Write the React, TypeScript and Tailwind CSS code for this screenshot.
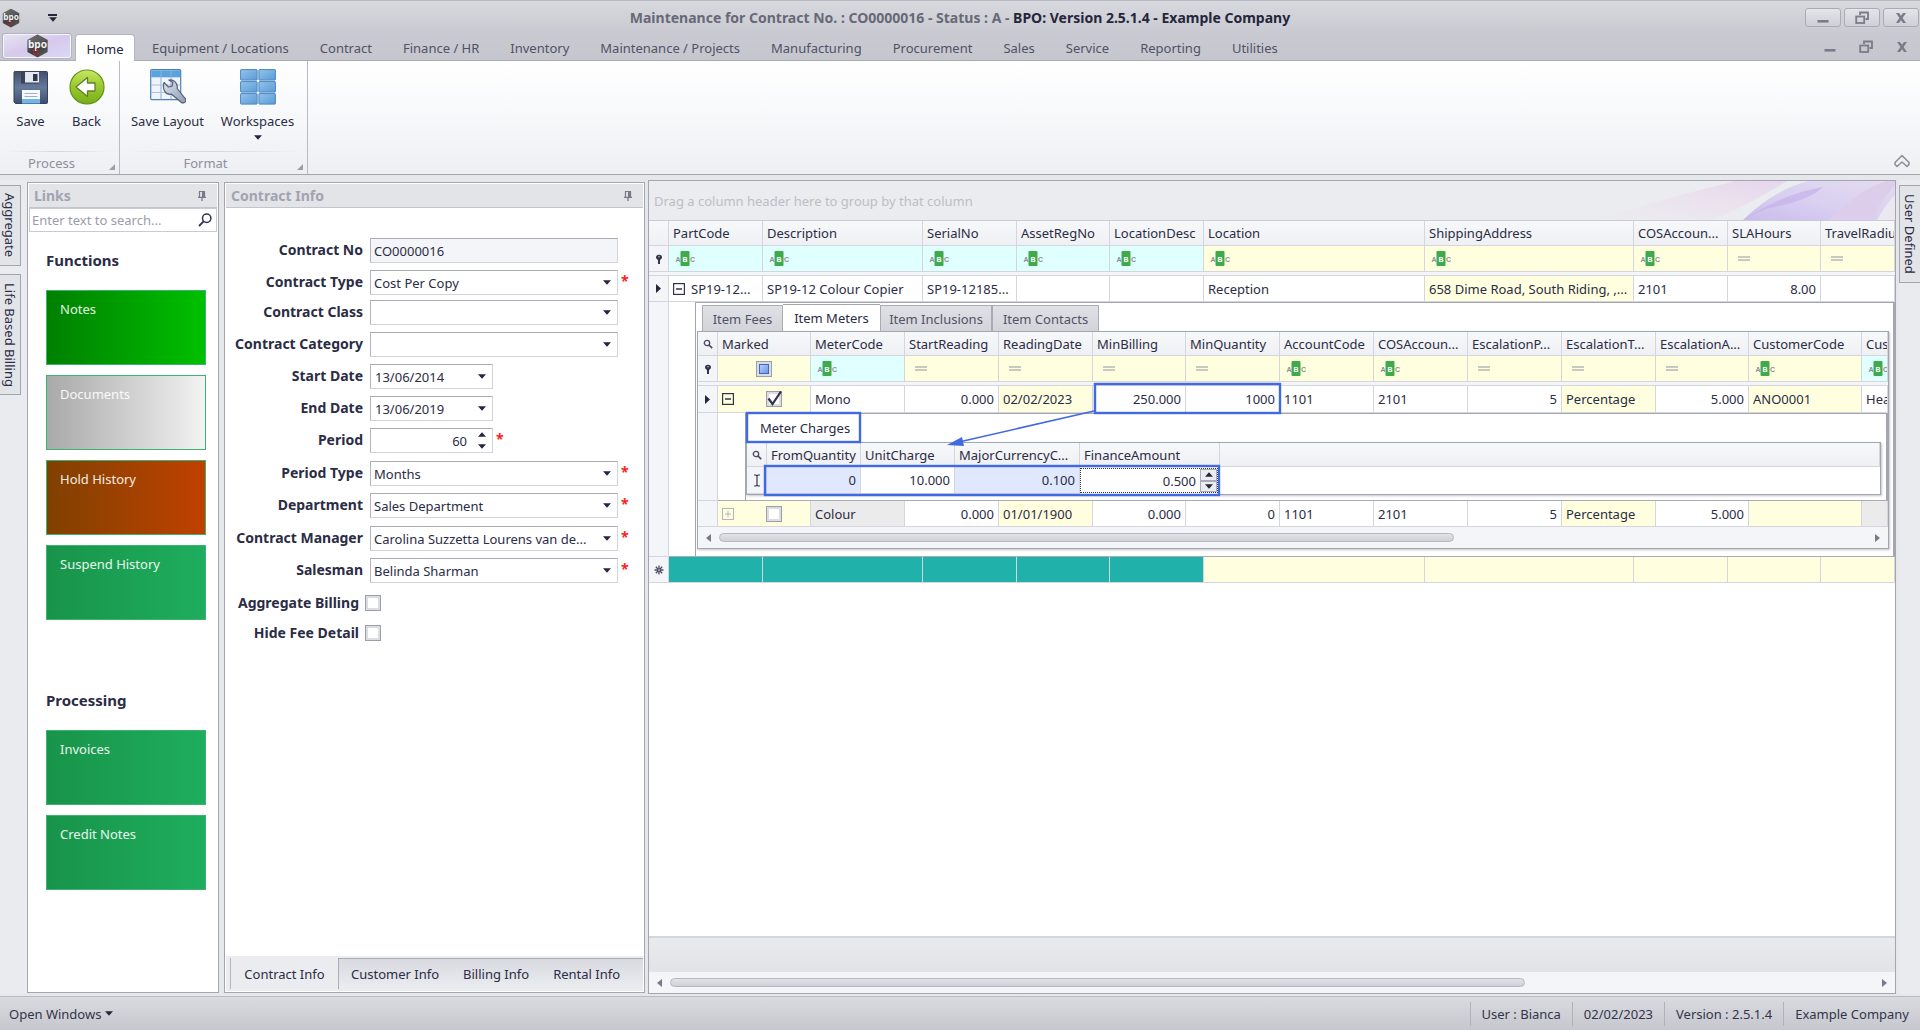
import type { ReactNode } from "react";

type Tone = "white" | "cyan" | "yellow" | "grey" | "teal" | "lavender";

const tones: Record<Tone, string> = {
  white: "bg-white",
  cyan: "bg-[#e0ffff]",
  yellow: "bg-[#ffffe0]",
  grey: "bg-[#ebebeb]",
  teal: "bg-[#20b2aa]",
  lavender: "bg-[#e0e8fd]",
};

/* ---------- icons ---------- */

function Logo({ className }: { className: string }) {
  return (
    <svg viewBox="0 0 24 26" className={className} aria-hidden="true">
      <defs>
        <linearGradient id="hex" x1="0" y1="0" x2="1" y2="1">
          <stop offset="0" stopColor="#7b7b7d" />
          <stop offset="0.5" stopColor="#3c3c3e" />
          <stop offset="1" stopColor="#5d5d60" />
        </linearGradient>
      </defs>
      <path d="M12 0.5 23 6.5V19.5L12 25.5 1 19.5V6.5Z" fill="url(#hex)" />
      <path d="M12 0.5 23 6.5 12 11 1 6.5Z" fill="#6a6a6c" opacity="0.6" />
      <text x="12" y="15.500" textAnchor="middle" fontSize="11" fontWeight="700" fill="#f2f2f2">bpo</text>
      <circle cx="10" cy="19.5" r="2.8" fill="none" stroke="#d0202c" strokeWidth="1.3" strokeDasharray="3 1.4" />
    </svg>
  );
}

function Down({ className = "" }: { className?: string }) {
  return (
    <svg viewBox="0 0 8 5" className={`h-[5px] w-2 ${className}`} aria-hidden="true">
      <path d="M0 0.3h8L4 4.8z" fill="#25263c" />
    </svg>
  );
}

function Up() {
  return (
    <svg viewBox="0 0 8 5" className="h-[5px] w-2" aria-hidden="true">
      <path d="M0 4.7h8L4 0.2z" fill="#25263c" />
    </svg>
  );
}

function SaveIcon() {
  return (
    <svg viewBox="0 0 36 36" className="size-9" aria-hidden="true">
      <defs>
        <linearGradient id="disk" x1="0" y1="0" x2="0" y2="1">
          <stop offset="0" stopColor="#44506a" />
          <stop offset="0.5" stopColor="#65799b" />
          <stop offset="1" stopColor="#3f4d70" />
        </linearGradient>
      </defs>
      <path d="M1.500 2.500h32a1 1 0 0 1 1 1v30a1 1 0 0 1-1 1h-31l-1.500-1.500v-29.500a1 1 0 0 1 .5-1z" fill="url(#disk)" stroke="#36415c" />
      <rect x="8" y="2.500" width="18" height="12" fill="#3a4257" />
      <rect x="12" y="3" width="14" height="10.500" fill="#e3e8f1" />
      <rect x="20" y="5" width="4.500" height="7" fill="#2f3648" />
      <rect x="9" y="21" width="18" height="13" fill="#f7f9fc" />
      <path d="M11.500 24.500h13M11.500 27.500h13" stroke="#9bb0cf" />
      <rect x="9" y="30" width="18" height="4.500" fill="#72b6e6" />
    </svg>
  );
}

function BackIcon() {
  return (
    <svg viewBox="0 0 36 36" className="size-9" aria-hidden="true">
      <defs>
        <linearGradient id="ball" x1="0" y1="0" x2="0" y2="1">
          <stop offset="0" stopColor="#c9e765" />
          <stop offset="0.45" stopColor="#9ccb30" />
          <stop offset="1" stopColor="#78ad18" />
        </linearGradient>
      </defs>
      <circle cx="18" cy="18" r="17" fill="url(#ball)" stroke="#639319" strokeWidth="1.200" />
      <path d="M7 18 18.500 8.500V14H26v8h-7.500v5.500z" fill="#fff" stroke="#5f7f2c" strokeWidth="1.300" strokeLinejoin="round" />
    </svg>
  );
}

function LayoutIcon() {
  return (
    <svg viewBox="0 0 36 36" className="size-9" aria-hidden="true">
      <defs>
        <linearGradient id="steel" x1="0" y1="0" x2="1" y2="1">
          <stop offset="0" stopColor="#dfe5ef" />
          <stop offset="1" stopColor="#8e9bb2" />
        </linearGradient>
      </defs>
      <rect x="0.700" y="0.700" width="30" height="30" rx="1" fill="#f1f4fb" stroke="#4d7fb8" strokeWidth="1.200" />
      <rect x="1.300" y="1.300" width="28.800" height="7" fill="#5aa3dc" />
      <path d="M11 1v29.500M21 1v29.500" stroke="#8fb0d8" />
      <path d="M1 16h29.500M1 23.500h29.500" stroke="#a9bfdf" />
      <path d="M14 13.500l4.500 4.500 3.500-.8.800-3.700-4-2.500c5-.8 9.200 3 8.400 8.500l7.800 9.800a2.700 2.700 0 0 1-3.800 3.900l-9.600-8c-6 1.200-9.600-4.700-7.600-11.700z" fill="url(#steel)" stroke="#55617a" strokeWidth="1.200" strokeLinejoin="round" />
    </svg>
  );
}

function WorkspacesIcon() {
  return (
    <svg viewBox="0 0 36 36" className="size-9" aria-hidden="true">
      <defs>
        <linearGradient id="tile" x1="0" y1="0" x2="1" y2="1">
          <stop offset="0" stopColor="#92c4ea" />
          <stop offset="1" stopColor="#5c9ad6" />
        </linearGradient>
      </defs>
      {[0.6, 12.6, 24.6].map((y) =>
        [0.6, 18.9].map((x) => (
          <rect key={`${x}-${y}`} x={x} y={y} width="16.500" height="10.500" rx="0.500" fill="url(#tile)" stroke="#4a86c4" />
        )),
      )}
    </svg>
  );
}

function Pin() {
  return (
    <svg viewBox="0 0 10 12" className="h-3 w-2.5" aria-hidden="true">
      <path d="M2.500 7V1.500h5V7" stroke="#77798c" fill="none" strokeWidth="1.200" />
      <rect x="5" y="1.500" width="3" height="5.500" fill="#77798c" />
      <path d="M1 7.300h8M5 7.500V11" stroke="#77798c" strokeWidth="1.300" />
    </svg>
  );
}

function Lens({ className }: { className: string }) {
  return (
    <svg viewBox="0 0 14 14" className={className} aria-hidden="true">
      <circle cx="8.700" cy="5.200" r="4.200" fill="none" stroke="#33344a" strokeWidth="1.500" />
      <path d="M5.600 8.400 1 13" stroke="#33344a" strokeWidth="1.800" />
    </svg>
  );
}

function GridLens() {
  return (
    <svg viewBox="0 0 10 10" className="mx-auto size-2.5" aria-hidden="true">
      <circle cx="4" cy="4" r="2.700" fill="none" stroke="#4a4b5e" strokeWidth="1.300" />
      <path d="M6 6 9.200 9.200" stroke="#4a4b5e" strokeWidth="1.700" />
    </svg>
  );
}

function FilterMark() {
  return (
    <svg viewBox="0 0 8 10" className="mx-auto h-2.5 w-2" aria-hidden="true">
      <path d="M4 0.700a3 2.600 0 0 1 3 2.600c0 1.500-1.300 2-2 3V10H3V6.300c-.700-1-2-1.500-2-3A3 2.600 0 0 1 4 .700z" fill="#33344a" />
      <circle cx="4" cy="2.800" r="0.800" fill="#b8b9c4" />
    </svg>
  );
}

function RowArrow() {
  return (
    <svg viewBox="0 0 5 9" className="mx-auto h-[9px] w-[5px]" aria-hidden="true">
      <path d="M0 0l5 4.500L0 9z" fill="#25263c" />
    </svg>
  );
}

function EditMark() {
  return (
    <svg viewBox="0 0 8 13" className="mx-auto h-[13px] w-2" aria-hidden="true">
      <path d="M1 1h2l1 1 1-1h2M1 12h2l1-1 1 1h2M4 2v9" stroke="#3a3b50" fill="none" strokeWidth="1.200" />
    </svg>
  );
}

function NewMark() {
  return (
    <svg viewBox="0 0 10 10" className="mx-auto size-2.5" aria-hidden="true">
      <path d="M5 0.500v9M0.500 5h9M1.800 1.800l6.400 6.400M8.200 1.800 1.800 8.200" stroke="#4a4b5e" strokeWidth="1.300" />
      <circle cx="5" cy="5" r="0.800" fill="#fff" />
    </svg>
  );
}

function AbcFilter() {
  return (
    <button type="button" aria-label="Contains filter" className="ml-0.5 block">
      <svg viewBox="0 0 20 15" className="h-[15px] w-5" fontFamily="Liberation Sans" fontWeight="700" aria-hidden="true">
        <text x="0.500" y="10.500" fontSize="7" fill="#8b8c94">A</text>
        <rect x="5.500" y="0" width="9" height="15" rx="1" fill="#3fa94c" />
        <text x="7.500" y="10.500" fontSize="7" fill="#fff">B</text>
        <text x="15" y="10.500" fontSize="7" fill="#8b8c94">C</text>
      </svg>
    </button>
  );
}

function EqualsFilter() {
  return (
    <button type="button" aria-label="Equals filter" className="ml-1.5 block">
      <svg viewBox="0 0 12 5" className="h-[5px] w-3" aria-hidden="true">
        <path d="M0 1h12M0 4h12" stroke="#92939d" strokeWidth="1.200" />
      </svg>
    </button>
  );
}

function Expander({ open, faint }: { open: boolean; faint?: boolean }) {
  return (
    <button type="button" aria-label={open ? "Collapse row" : "Expand row"} className="block">
      <svg viewBox="0 0 12 12" className="size-3" stroke={faint ? "#b4b5bf" : "#33344a"} fill="none" aria-hidden="true">
        <rect x="0.500" y="0.500" width="11" height="11" strokeWidth={faint ? 1 : 1.4} />
        <path d={open ? "M3 6h6" : "M3 6h6M6 3v6"} strokeWidth={faint ? 1 : 1.5} />
      </svg>
    </button>
  );
}

function MinimizeGlyph() {
  return (
    <svg viewBox="0 0 14 14" className="size-3.5" aria-hidden="true">
      <rect x="1.500" y="9" width="11" height="2.600" fill="#7b7c8a" />
    </svg>
  );
}

function RestoreGlyph() {
  return (
    <svg viewBox="0 0 14 14" className="size-3.5" fill="none" stroke="#7b7c8a" strokeWidth="1.800" aria-hidden="true">
      <path d="M5 4V1.500h8V8h-2.500" />
      <rect x="1.200" y="5.500" width="8" height="6.500" />
    </svg>
  );
}

function CloseGlyph() {
  return (
    <svg viewBox="0 0 14 14" className="size-3.5" aria-hidden="true">
      <path d="M2 2h3l2 2.700L9 2h3L8.600 7l3.400 5H9L7 9.200 5 12H2l3.400-5z" fill="#7b7c8a" />
    </svg>
  );
}

function ScrollArrow({ left }: { left?: boolean }) {
  return (
    <svg viewBox="0 0 5 8" className="h-2 w-[5px] shrink-0" aria-hidden="true">
      <path d={left ? "M5 0v8L0 4z" : "M0 0v8l5-4z"} fill="#77798c" />
    </svg>
  );
}

/* ---------- ribbon ---------- */

const ribbonTabs = [
  "Equipment / Locations",
  "Contract",
  "Finance / HR",
  "Inventory",
  "Maintenance / Projects",
  "Manufacturing",
  "Procurement",
  "Sales",
  "Service",
  "Reporting",
  "Utilities",
];

function TitleBar() {
  const box =
    "flex h-[19px] w-9 items-center justify-center rounded-[3px] border border-[#a9abb6] bg-linear-to-b from-[#e4e5e9] to-[#cfd0d7]";
  return (
    <header className="grid h-[34px] grid-cols-[1fr_auto_1fr] items-center border-t border-[#b9bac2] bg-linear-to-b from-[#d8d9de] to-[#c9cad1]">
      <div className="flex items-center pl-0.5">
        <Logo className="h-5 w-[18px]" />
        <button type="button" aria-label="Customize quick access toolbar" className="ml-7 flex flex-col items-center gap-px">
          <span className="h-0.5 w-[9px] bg-[#25263c]" />
          <Down />
        </button>
      </div>
      <h1 className="text-sm leading-5 font-bold whitespace-nowrap text-[#25263c]">
        <span className="text-[#676878]">Maintenance for Contract No. : CO0000016 - Status : A -</span> BPO: Version
        2.5.1.4 - Example Company
      </h1>
      <div className="flex justify-end gap-[3px] pr-px">
        <button type="button" aria-label="Minimize" className={box}><MinimizeGlyph /></button>
        <button type="button" aria-label="Restore" className={box}><RestoreGlyph /></button>
        <button type="button" aria-label="Close" className={box}><CloseGlyph /></button>
      </div>
    </header>
  );
}

function RibbonTabs() {
  return (
    <nav className="flex h-[27px] items-stretch border-b border-[#a9abb6] bg-linear-to-b from-[#c9cad1] to-[#c6c7ce] text-[#515266]">
      <button
        type="button"
        aria-label="Application menu"
        className="ml-[3px] flex h-6 w-[68px] items-center justify-center rounded-xs border border-white/80 bg-linear-to-br from-[#e6e2f3] via-[#d6c9ec] to-[#d9d8f6] outline outline-[#b3b4c0]"
      >
        <Logo className="h-6 w-[23px]" />
      </button>
      <button type="button" className="mr-px -mb-px ml-1 w-[60px] rounded-t-sm border border-b-0 border-[#b3b4be] bg-white pt-0.5 text-[#25263c]">
        Home
      </button>
      {ribbonTabs.map((t) => (
        <button key={t} type="button" className="pt-0.5 pr-[15px] pl-4">
          {t}
        </button>
      ))}
      <div className="ml-auto flex items-center gap-[22px] pr-[11px]">
        <button type="button" aria-label="Minimize document"><MinimizeGlyph /></button>
        <button type="button" aria-label="Restore document"><RestoreGlyph /></button>
        <button type="button" aria-label="Close document"><CloseGlyph /></button>
      </div>
    </nav>
  );
}

function RibbonGroup({ title, width, children }: { title: string; width: string; children: ReactNode }) {
  return (
    <section className={`flex flex-col border-r border-[#b9bac4] ${width}`}>
      <div className="flex flex-1 justify-center pt-2 pr-0.5">{children}</div>
      <div className="mx-2 h-px bg-linear-to-r from-transparent via-[#d5d6dd] to-transparent" />
      <div className="flex h-[22px] items-center">
        <h2 className="flex-1 pr-1.5 text-center text-[#8e8f9d]">{title}</h2>
        <svg viewBox="0 0 6 6" className="mt-2 mr-1 size-1.5" aria-hidden="true">
          <path d="M6 0v6H0z" fill="#9d9eaa" />
        </svg>
      </div>
    </section>
  );
}

function RibbonButton({ label, width, icon, menu }: { label: string; width: string; icon: ReactNode; menu?: boolean }) {
  return (
    <button type="button" className={`flex flex-col items-center whitespace-nowrap ${width}`}>
      {icon}
      <span className="mt-2">{label}</span>
      {menu && <Down className="mt-1.5" />}
    </button>
  );
}

function Ribbon() {
  return (
    <div className="flex h-[114px] border-b border-[#a3a5b0] bg-linear-to-b from-white via-[#f7f8fa] to-[#eeeff3]">
      <RibbonGroup title="Process" width="w-[120px]">
        <RibbonButton label="Save" width="w-14" icon={<SaveIcon />} />
        <RibbonButton label="Back" width="w-14" icon={<BackIcon />} />
      </RibbonGroup>
      <RibbonGroup title="Format" width="w-[188px]">
        <RibbonButton label="Save Layout" width="w-[90px]" icon={<LayoutIcon />} />
        <RibbonButton label="Workspaces" width="w-[90px]" icon={<WorkspacesIcon />} menu />
      </RibbonGroup>
      <button type="button" aria-label="Collapse ribbon" className="mt-auto mr-2.5 mb-1.5 ml-auto">
        <svg viewBox="0 0 16 14" className="h-3.5 w-4" fill="none" stroke="#8b8c9a" strokeWidth="1.500" aria-hidden="true">
          <path d="M1 8.500 8 1.500l7 7v2l-2 2L8 8l-5 4.500-2-2z" strokeLinejoin="round" />
        </svg>
      </button>
    </div>
  );
}

/* ---------- docked panels ---------- */

function SideTab({ label, className }: { label: string; className: string }) {
  return (
    <button
      type="button"
      className={`w-[21px] border border-[#a3a5b0] bg-[#e3e4e8] whitespace-nowrap [writing-mode:vertical-rl] ${className}`}
    >
      {label}
    </button>
  );
}

function PanelHeader({ title }: { title: string }) {
  return (
    <div className="flex h-6 items-center justify-between border-b border-[#c3c4cc] bg-[#e3e4e8] pr-2.5 pl-[5px]">
      <h2 className="text-sm font-bold text-[#a2a3b1]">{title}</h2>
      <button type="button" aria-label={`Pin ${title}`}><Pin /></button>
    </div>
  );
}

function Tile({ label, tone }: { label: string; tone: string }) {
  return (
    <button
      type="button"
      className={`h-[75px] w-40 border border-[#3cb371] bg-linear-to-r px-[13px] pt-2.5 pb-12 text-left text-white/90 ${tone}`}
    >
      {label}
    </button>
  );
}

const green = "from-[#18944a] to-[#1eae5d]";

function LinksPanel() {
  return (
    <aside className="flex w-[192px] flex-col border border-[#a3a5b0] bg-white p-px">
      <PanelHeader title="Links" />
      <div className="flex h-6 items-center border border-[#c9cad2] pr-1 pl-0.5">
        <input
          type="search"
          aria-label="Search links"
          placeholder="Enter text to search..."
          className="min-w-0 flex-1 outline-none placeholder:text-[#9b9cab]"
        />
        <Lens className="size-3.5" />
      </div>
      <div className="flex flex-col gap-2.5 pt-4 pl-[17px]">
        <h3 className="mb-2 h-6 text-[15px] leading-6 font-bold">Functions</h3>
        <Tile label="Notes" tone="from-[#008000] to-[#00c000]" />
        <Tile label="Documents" tone="from-[#a9a9a9] to-[#f3f3f3]" />
        <Tile label="Hold History" tone="from-[#804000] to-[#c04000]" />
        <Tile label="Suspend History" tone={green} />
        <h3 className="mt-[58px] mb-2 h-6 text-[15px] leading-6 font-bold">Processing</h3>
        <Tile label="Invoices" tone={green} />
        <Tile label="Credit Notes" tone={green} />
      </div>
    </aside>
  );
}

type Field = {
  id: string;
  label: string;
  kind: "readonly" | "select" | "date" | "spin";
  value: string;
  required?: boolean;
  height: string;
};

const fields: Field[] = [
  { id: "no", label: "Contract No", kind: "readonly", value: "CO0000016", height: "h-8" },
  { id: "type", label: "Contract Type", kind: "select", value: "Cost Per Copy", required: true, height: "h-[30px]" },
  { id: "class", label: "Contract Class", kind: "select", value: "", height: "h-8" },
  { id: "category", label: "Contract Category", kind: "select", value: "", height: "h-8" },
  { id: "start", label: "Start Date", kind: "date", value: "13/06/2014", height: "h-8" },
  { id: "end", label: "End Date", kind: "date", value: "13/06/2019", height: "h-8" },
  { id: "period", label: "Period", kind: "spin", value: "60", required: true, height: "h-[33px]" },
  { id: "periodType", label: "Period Type", kind: "select", value: "Months", required: true, height: "h-8" },
  { id: "department", label: "Department", kind: "select", value: "Sales Department", required: true, height: "h-[33px]" },
  { id: "manager", label: "Contract Manager", kind: "select", value: "Carolina Suzzetta Lourens van de...", required: true, height: "h-8" },
  { id: "salesman", label: "Salesman", kind: "select", value: "Belinda Sharman", required: true, height: "h-[30px]" },
];

function FieldControl({ field }: { field: Field }) {
  const frame = "h-[25px] border border-[#d3d4db] border-t-[#a9abb6] border-l-[#b3b5bf]";
  if (field.kind === "readonly")
    return <input id={field.id} readOnly defaultValue={field.value} className={`w-[248px] bg-[#f4f5f8] px-[3px] ${frame}`} />;
  if (field.kind === "select")
    return (
      <div className="relative">
        <select id={field.id} className={`block w-[248px] appearance-none bg-white pr-6 pl-[3px] ${frame}`}>
          <option>{field.value}</option>
        </select>
        <Down className="pointer-events-none absolute top-2.5 right-[7px]" />
      </div>
    );
  if (field.kind === "date")
    return (
      <div className={`flex w-[123px] items-center bg-white pr-1.5 ${frame}`}>
        <input id={field.id} defaultValue={field.value} className="min-w-0 flex-1 pl-1" />
        <button type="button" aria-label={`Choose ${field.label}`}><Down /></button>
      </div>
    );
  return (
    <div className={`flex w-[123px] items-center gap-[11px] bg-white pr-1.5 ${frame}`}>
      <input id={field.id} defaultValue={field.value} className="min-w-0 flex-1 text-right" />
      <div className="flex flex-col gap-[7px]">
        <button type="button" aria-label="Increase period"><Up /></button>
        <button type="button" aria-label="Decrease period"><Down /></button>
      </div>
    </div>
  );
}

function ContractPanel() {
  return (
    <section className="flex w-[421px] flex-col border border-[#a3a5b0] bg-white p-px">
      <PanelHeader title="Contract Info" />
      <form className="flex-1 pt-[30px]">
        {fields.map((f) => (
          <div key={f.id} className={`flex items-start ${f.height}`}>
            <label htmlFor={f.id} className="mr-[7px] w-[137px] text-right text-sm leading-[23px] font-bold whitespace-nowrap">
              {f.label}
            </label>
            <FieldControl field={f} />
            {f.required && <span className="ml-[3px] text-sm leading-[22px] font-bold text-[#ff2020]">*</span>}
          </div>
        ))}
        {["Aggregate Billing", "Hide Fee Detail"].map((t) => (
          <label key={t} className="flex h-[30px] items-center text-sm font-bold">
            <span className="mr-1.5 w-[133px] text-right whitespace-nowrap">{t}</span>
            <input type="checkbox" className="size-4 appearance-none border border-[#9c9eab] bg-white shadow-[inset_0_0_0_2px_#dcdde3]" />
          </label>
        ))}
      </form>
      <div className="flex h-[35px] items-stretch bg-[#ebecf0] pl-1">
        <button type="button" className="my-0.5 w-[108px] border-l border-[#b3b5bf]">Contract Info</button>
        <div className="my-0.5 flex flex-1 border-t border-l border-[#a9abb6] bg-linear-to-b from-[#d9dae0] to-[#ebecf0]">
          {["Customer Info", "Billing Info", "Rental Info"].map((t) => (
            <button key={t} type="button" className="px-3">{t}</button>
          ))}
        </div>
      </div>
    </section>
  );
}

/* ---------- grids ---------- */

const line = "border-r border-b border-[#d4d5dd]";

function HeadCell({ children }: { children?: ReactNode }) {
  return (
    <th scope="col" className={`overflow-hidden bg-linear-to-b from-[#f7f8fa] to-[#eff0f3] px-1 text-left font-normal whitespace-nowrap ${line}`}>
      {children}
    </th>
  );
}

function Cell({ tone = "white", right, children }: { tone?: Tone; right?: boolean; children?: ReactNode }) {
  return (
    <td className={`overflow-hidden px-1 whitespace-nowrap ${line} ${tones[tone]} ${right ? "text-right" : ""}`}>
      {children}
    </td>
  );
}

function Indicator({ children }: { children?: ReactNode }) {
  return <td className={`bg-[#f4f5f8] p-0 ${line}`}>{children}</td>;
}

function GapRow({ span }: { span: number }) {
  return (
    <tr className="h-1">
      <td colSpan={span} className="h-1 border-b border-[#d4d5dd] bg-[#f4f5f8] p-0" />
    </tr>
  );
}

function ScrollBar({ thumb, label }: { thumb: string; label: string }) {
  return (
    <div role="scrollbar" aria-label={label} aria-orientation="horizontal" aria-controls="grid" aria-valuenow={0} className="flex h-[21px] items-center bg-[#f4f5f8] px-2">
      <ScrollArrow left />
      <div className="mx-2 flex-1">
        <div className={`h-[9px] rounded-full border border-[#b6b7c1] bg-linear-to-b from-[#e2e3e7] to-[#cfd0d7] ${thumb}`} />
      </div>
      <ScrollArrow />
    </div>
  );
}

function MeterCharges() {
  return (
    <div className="h-[87px] border-t border-r-2 border-l border-[#a3a5b0] bg-white">
      <div className="h-7">
        <button type="button" className="h-7 w-[116px] pl-0.5">Meter Charges</button>
      </div>
      <div className="mr-[5px] border border-[#a3a5b0] shadow-[1px_1px_2px_#c3c4cc]">
        <table className="w-full table-fixed border-separate border-spacing-0">
          <colgroup>
            <col className="w-5" />
            <col className="w-[94px]" />
            <col className="w-[94px]" />
            <col className="w-[125px]" />
            <col className="w-[140px]" />
            <col />
          </colgroup>
          <thead>
            <tr className="h-6">
              <HeadCell><GridLens /></HeadCell>
              <HeadCell>FromQuantity</HeadCell>
              <HeadCell>UnitCharge</HeadCell>
              <HeadCell>MajorCurrencyC...</HeadCell>
              <HeadCell>FinanceAmount</HeadCell>
              <HeadCell />
            </tr>
          </thead>
          <tbody>
            <tr className="h-[27px]">
              <Indicator><EditMark /></Indicator>
              <Cell tone="lavender" right>0</Cell>
              <Cell right>10.000</Cell>
              <Cell tone="lavender" right>0.100</Cell>
              <td className="bg-white py-0 pr-0.5 pl-0">
                <div className="flex h-[25px] items-center border border-dotted border-[#33344a]">
                  <input aria-label="FinanceAmount" defaultValue="0.500" className="min-w-0 flex-1 pr-1 text-right" />
                  <div className="flex h-full w-[17px] flex-col">
                    <button type="button" aria-label="Increase amount" className="flex flex-1 items-center justify-center border border-[#a9abb6] bg-[#ebecef]"><Up /></button>
                    <button type="button" aria-label="Decrease amount" className="flex flex-1 items-center justify-center border border-[#a9abb6] bg-[#ebecef]"><Down /></button>
                  </div>
                </div>
              </td>
              <td className="bg-white" />
            </tr>
          </tbody>
        </table>
      </div>
    </div>
  );
}

const meterColumns: { name: string; width: string; tone: Tone; abc?: boolean }[] = [
  { name: "MeterCode", width: "w-[94px]", tone: "cyan", abc: true },
  { name: "StartReading", width: "w-[94px]", tone: "yellow" },
  { name: "ReadingDate", width: "w-[94px]", tone: "yellow" },
  { name: "MinBilling", width: "w-[93px]", tone: "yellow" },
  { name: "MinQuantity", width: "w-[94px]", tone: "yellow" },
  { name: "AccountCode", width: "w-[94px]", tone: "yellow", abc: true },
  { name: "COSAccoun...", width: "w-[94px]", tone: "yellow", abc: true },
  { name: "EscalationP...", width: "w-[94px]", tone: "yellow" },
  { name: "EscalationT...", width: "w-[94px]", tone: "yellow" },
  { name: "EscalationA...", width: "w-[93px]", tone: "yellow" },
  { name: "CustomerCode", width: "w-[113px]", tone: "yellow", abc: true },
  { name: "Cus", width: "", tone: "cyan", abc: true },
];

function ItemMeters() {
  return (
    <div className="relative mr-1 ml-px border border-[#a3a5b0] shadow-[1px_1px_2px_#c3c4cc]">
      <table className="w-full table-fixed border-separate border-spacing-0">
        <colgroup>
          <col className="w-5" />
          <col className="w-[93px]" />
          {meterColumns.map((c) => <col key={c.name} className={c.width} />)}
        </colgroup>
        <thead>
          <tr className="h-6">
            <HeadCell><GridLens /></HeadCell>
            <HeadCell>Marked</HeadCell>
            {meterColumns.map((c) => <HeadCell key={c.name}>{c.name}</HeadCell>)}
          </tr>
        </thead>
        <tbody>
          <tr className="h-[26px]">
            <Indicator><FilterMark /></Indicator>
            <Cell tone="yellow">
              <button type="button" aria-label="Filter marked" className="mx-auto block size-4 border border-[#9c9eab] bg-[#dcdde3] p-0.5">
                <span className="block size-full border border-[#3e68c0] bg-linear-to-br from-[#b7cdf6] to-[#6f97e4]" />
              </button>
            </Cell>
            {meterColumns.map((c) => (
              <Cell key={c.name} tone={c.tone}>{c.abc ? <AbcFilter /> : <EqualsFilter />}</Cell>
            ))}
          </tr>
          <GapRow span={14} />
          <tr className="h-[27px]">
            <Indicator><RowArrow /></Indicator>
            <Cell tone="yellow">
              <div className="flex items-center gap-8">
                <Expander open />
                <label className="relative size-4">
                  <input type="checkbox" aria-label="Mono marked" defaultChecked className="block size-4 appearance-none border border-[#9c9eab] bg-white shadow-[inset_0_0_0_2px_#dcdde3]" />
                  <svg viewBox="0 0 16 16" className="pointer-events-none absolute inset-0 size-4" aria-hidden="true">
                    <path d="M2.500 7.500 6.500 13 15 0.500" fill="none" stroke="#33344a" strokeWidth="2.200" />
                  </svg>
                </label>
              </div>
            </Cell>
            <Cell>Mono</Cell>
            <Cell right>0.000</Cell>
            <Cell tone="yellow">02/02/2023</Cell>
            <Cell right>250.000</Cell>
            <Cell right>1000</Cell>
            <Cell>1101</Cell>
            <Cell>2101</Cell>
            <Cell right>5</Cell>
            <Cell tone="yellow">Percentage</Cell>
            <Cell right>5.000</Cell>
            <Cell tone="yellow">ANO0001</Cell>
            <Cell>Hea</Cell>
          </tr>
          <tr>
            <Indicator />
            <td colSpan={13} className="border-b border-[#a9abb6] bg-white p-0 pl-[27px]"><MeterCharges /></td>
          </tr>
          <tr className="h-[26px]">
            <Indicator />
            <Cell tone="yellow">
              <div className="flex items-center gap-8">
                <Expander open={false} faint />
                <input type="checkbox" aria-label="Colour marked" className="size-4 appearance-none border border-[#9c9eab] bg-white shadow-[inset_0_0_0_2px_#dcdde3]" />
              </div>
            </Cell>
            <Cell tone="grey">Colour</Cell>
            <Cell right>0.000</Cell>
            <Cell tone="yellow">01/01/1900</Cell>
            <Cell right>0.000</Cell>
            <Cell right>0</Cell>
            <Cell>1101</Cell>
            <Cell>2101</Cell>
            <Cell right>5</Cell>
            <Cell tone="yellow">Percentage</Cell>
            <Cell right>5.000</Cell>
            <Cell tone="yellow" />
            <Cell tone="grey" />
          </tr>
        </tbody>
      </table>
      <ScrollBar thumb="w-[64%]" label="Scroll item meters" />
      <svg viewBox="0 0 600 170" className="pointer-events-none absolute -top-px -left-px h-[170px] w-[600px]" aria-hidden="true">
        <g fill="none" stroke="#4169e1" strokeWidth="2.400">
          <rect x="398" y="53" width="185" height="29" />
          <rect x="50" y="82" width="113" height="29" />
          <rect x="68" y="135" width="454" height="29" />
        </g>
        <path d="M397 80 262 111" stroke="#4169e1" strokeWidth="1.600" />
        <path d="M250 114 265 106 267 115z" fill="#4169e1" />
      </svg>
    </div>
  );
}

function ItemTabs() {
  const idle = "h-[26px] border border-b-0 border-[#a9abb6] bg-linear-to-b from-[#e0e1e6] to-[#d3d4da] text-[#515266]";
  return (
    <div className="flex h-7 items-end pl-1.5">
      <button type="button" className={`w-[81px] ${idle}`}>Item Fees</button>
      <button type="button" className="-mb-px h-7 w-[97px] border-t border-[#a3a5b0] bg-white pb-0.5">Item Meters</button>
      <button type="button" className={`w-[112px] ${idle}`}>Item Inclusions</button>
      <button type="button" className={`w-[107px] ${idle}`}>Item Contacts</button>
    </div>
  );
}

const itemColumns: { name: string; width: string; tone: Tone; abc?: boolean; fresh: Tone }[] = [
  { name: "PartCode", width: "w-[94px]", tone: "cyan", abc: true, fresh: "teal" },
  { name: "Description", width: "w-[160px]", tone: "cyan", abc: true, fresh: "teal" },
  { name: "SerialNo", width: "w-[94px]", tone: "cyan", abc: true, fresh: "teal" },
  { name: "AssetRegNo", width: "w-[93px]", tone: "cyan", abc: true, fresh: "teal" },
  { name: "LocationDesc", width: "w-[94px]", tone: "cyan", abc: true, fresh: "teal" },
  { name: "Location", width: "w-[221px]", tone: "yellow", abc: true, fresh: "yellow" },
  { name: "ShippingAddress", width: "w-[209px]", tone: "yellow", abc: true, fresh: "yellow" },
  { name: "COSAccoun...", width: "w-[94px]", tone: "yellow", abc: true, fresh: "yellow" },
  { name: "SLAHours", width: "w-[93px]", tone: "yellow", fresh: "yellow" },
  { name: "TravelRadiu", width: "", tone: "yellow", fresh: "yellow" },
];

function GroupBar() {
  return (
    <div className="relative flex h-10 items-center overflow-hidden border-b border-[#c9cad2] bg-[#ebecef] px-[5px] text-[#bcbdc7]">
      Drag a column header here to group by that column
      <svg viewBox="0 0 300 39" className="absolute top-0 right-0 h-[39px] w-[300px]" aria-hidden="true">
        <defs>
          <linearGradient id="pink" x1="0" y1="1" x2="1" y2="0">
            <stop offset="0" stopColor="#ecdff0" stopOpacity="0" />
            <stop offset="0.600" stopColor="#ead9ec" />
            <stop offset="1" stopColor="#e3c8ec" />
          </linearGradient>
          <linearGradient id="violet" x1="0" y1="1" x2="1" y2="0">
            <stop offset="0" stopColor="#c9bcec" />
            <stop offset="0.450" stopColor="#d9cff1" />
            <stop offset="1" stopColor="#e4dcee" />
          </linearGradient>
        </defs>
        <path d="M0 39C60 20 110 8 140 0h52Q150 26 118 39z" fill="url(#pink)" opacity="0.600" />
        <path d="M148 39Q180 8 214 0h86v39z" fill="url(#violet)" />
        <path d="M150 38Q190 12 228 6 214 20 170 28z" fill="#c2aeea" opacity="0.600" />
        <path d="M234 39Q264 8 292 0h8v4Q282 24 278 39z" fill="#dccdea" />
        <path d="M282 39Q290 24 300 14v25z" fill="#ebe8f0" />
      </svg>
    </div>
  );
}

function ItemsPanel() {
  return (
    <main className="flex min-w-0 flex-1 flex-col overflow-hidden border border-[#a3a5b0] bg-white">
      <GroupBar />
      <table id="grid" className="w-full table-fixed border-separate border-spacing-0">
        <colgroup>
          <col className="w-5" />
          {itemColumns.map((c) => <col key={c.name} className={c.width} />)}
        </colgroup>
        <thead>
          <tr className="h-[25px]">
            <HeadCell />
            {itemColumns.map((c) => <HeadCell key={c.name}>{c.name}</HeadCell>)}
          </tr>
        </thead>
        <tbody>
          <tr className="h-[26px]">
            <Indicator><FilterMark /></Indicator>
            {itemColumns.map((c) => (
              <Cell key={c.name} tone={c.tone}>{c.abc ? <AbcFilter /> : <EqualsFilter />}</Cell>
            ))}
          </tr>
          <GapRow span={11} />
          <tr className="h-[26px]">
            <Indicator><RowArrow /></Indicator>
            <Cell>
              <div className="flex items-center gap-1.5">
                <Expander open />
                SP19-12...
              </div>
            </Cell>
            <Cell>SP19-12 Colour Copier</Cell>
            <Cell>SP19-12185...</Cell>
            <Cell />
            <Cell />
            <Cell>Reception</Cell>
            <Cell tone="yellow">658 Dime Road, South Riding, ,...</Cell>
            <Cell>2101</Cell>
            <Cell right>8.00</Cell>
            <Cell />
          </tr>
          <tr>
            <Indicator />
            <td colSpan={10} className="border-b border-[#a9abb6] p-0 pl-[26px]">
              <div className="border-t border-r-2 border-l border-[#a3a5b0] pb-[7px]">
                <ItemTabs />
                <ItemMeters />
              </div>
            </td>
          </tr>
          <tr className="h-[26px]">
            <Indicator><NewMark /></Indicator>
            {itemColumns.map((c) => <Cell key={c.name} tone={c.fresh} />)}
          </tr>
        </tbody>
      </table>
      <div className="mt-auto h-9 border-t-2 border-[#d4d5dd] bg-linear-to-b from-[#e9eaee] to-[#e2e3e7]" />
      <ScrollBar thumb="w-[71%]" label="Scroll items" />
    </main>
  );
}

function StatusBar() {
  return (
    <footer className="flex h-[34px] items-center border-t border-[#b9bac2] bg-linear-to-b from-[#dadbe0] to-[#c6c7ce] pl-[9px] text-[#33344a]">
      <button type="button" className="flex items-center gap-1">
        Open Windows <Down />
      </button>
      <div className="ml-auto flex">
        {["User : Bianca", "02/02/2023", "Version : 2.5.1.4", "Example Company"].map((t) => (
          <span key={t} className="border-l border-[#b0b1bb] px-[11px] py-1">{t}</span>
        ))}
      </div>
    </footer>
  );
}

export default function App() {
  return (
    <div className="flex min-h-screen flex-col bg-[#e6e7eb] font-['Noto_Sans','DejaVu_Sans',sans-serif] text-[13px] leading-4 text-[#2b2c45]">
      <TitleBar />
      <RibbonTabs />
      <Ribbon />
      <div className="flex flex-1 pt-[5px] pb-0.5">
        <div className="flex w-[27px] flex-col items-start gap-2 bg-[#eaebef] pt-[5px]">
          <SideTab label="Aggregate" className="h-[81px] border-l-0" />
          <SideTab label="Life Based Billing" className="h-[121px] border-l-0" />
        </div>
        <div className="flex min-w-0 flex-1 gap-[3px] pr-[3px]">
          <div className="flex gap-[5px] pt-0.5 pb-px">
            <LinksPanel />
            <ContractPanel />
          </div>
          <ItemsPanel />
        </div>
        <div className="flex w-[21px] flex-col items-end bg-[#eaebef] pt-[5px]">
          <SideTab label="User Defined" className="h-[98px] border-r-0" />
        </div>
      </div>
      <StatusBar />
    </div>
  );
}
